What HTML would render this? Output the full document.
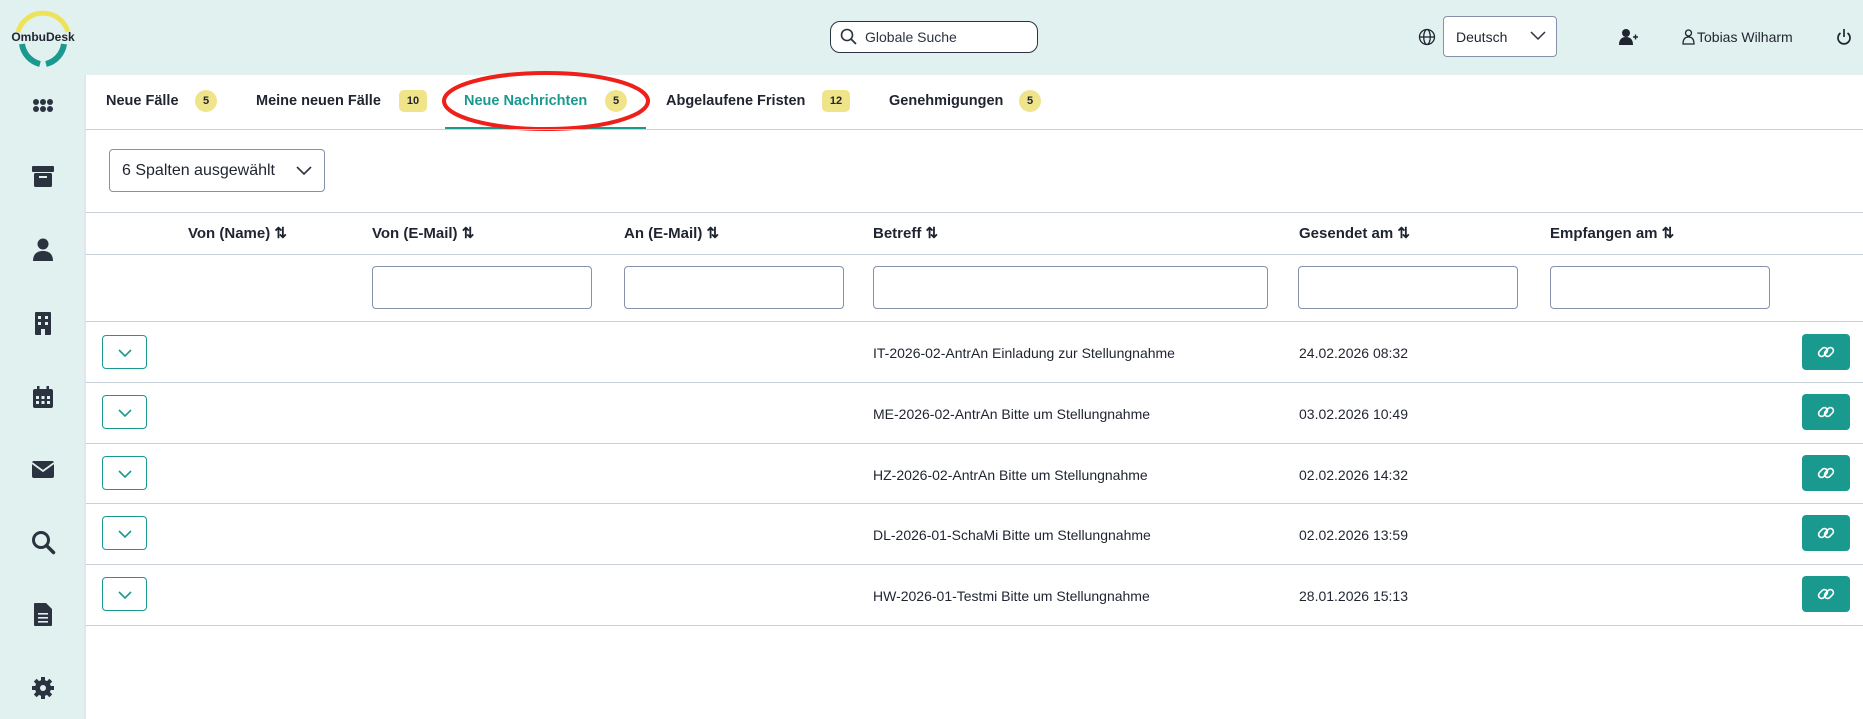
<!DOCTYPE html>
<html><head><meta charset="utf-8"><style>
*{box-sizing:border-box;margin:0;padding:0}
body{width:1863px;height:719px;overflow:hidden;background:#fff;font-family:"Liberation Sans",sans-serif;color:#1f2430;position:relative}
.hdr{position:absolute;left:0;top:0;width:1863px;height:75px;background:#e1f1ef}
.side{position:absolute;left:0;top:75px;width:86px;height:644px;background:#e1f1ef;border-right:2px solid #e3e6ea}
.abs{position:absolute}
.tab{position:absolute;top:93px;font-size:14.5px;font-weight:bold;color:#1f2430}
.badge{position:absolute;top:90px;height:22px;border-radius:11px;background:#efe48a;font-size:11px;font-weight:bold;text-align:center;line-height:22px;color:#1f2430}
.hl{position:absolute;left:86px;width:1777px;height:1px;background:#c8d0da}
.th{position:absolute;top:224px;font-size:15px;font-weight:bold}
.inp{position:absolute;top:266px;height:43px;border:1px solid #8592aa;border-radius:4px}
.td{position:absolute;font-size:14px}
.exp{position:absolute;left:102px;width:45px;height:34px;border:1px solid #1a9a8f;border-radius:4px}
.lnk{position:absolute;left:1802px;width:48px;height:36px;background:#1a9a8f;border-radius:4px}
.ic{position:absolute;left:27px;width:32px;height:32px}
</style></head><body>
<div class="hdr"></div>
<div class="side"></div>
<svg class="abs" style="left:6px;top:4px" width="74" height="64" viewBox="0 0 74 64">
<path d="M12 28 A26 26 0 0 1 62 28" fill="none" stroke="#ece35a" stroke-width="5"/>
<path d="M16 40 A24 24 0 0 0 34 60" fill="none" stroke="#1a9a8f" stroke-width="6"/>
<path d="M40 60 A24 24 0 0 0 58 40" fill="none" stroke="#1a9a8f" stroke-width="6"/>
<text x="37" y="37" font-size="12" font-weight="bold" text-anchor="middle" fill="#1f2430" font-family="Liberation Sans">OmbuDesk</text>
</svg>
<div class="abs" style="left:830px;top:21px;width:208px;height:32px;border:1.5px solid #2b3340;border-radius:10px;background:#fff"></div>
<svg class="abs" style="left:840px;top:28px" width="18" height="18" viewBox="0 0 18 18"><circle cx="7" cy="7" r="5.5" fill="none" stroke="#2b3340" stroke-width="1.6"/><path d="M11 11l5 5" stroke="#2b3340" stroke-width="1.8"/></svg>
<div class="abs" style="left:865px;top:29px;font-size:14px;color:#2b3340">Globale Suche</div>
<svg class="abs" style="left:1418px;top:28px" width="18" height="18" viewBox="0 0 18 18"><g fill="none" stroke="#1f2430" stroke-width="1.3"><circle cx="9" cy="9" r="7.5"/><ellipse cx="9" cy="9" rx="3.3" ry="7.5"/><path d="M1.5 9h15"/></g></svg>
<div class="abs" style="left:1443px;top:16px;width:114px;height:41px;border:1px solid #8592aa;border-radius:4px;background:#fff"></div>
<div class="abs" style="left:1456px;top:29px;font-size:14px">Deutsch</div>
<svg class="abs" style="left:1530px;top:31px" width="16" height="10" viewBox="0 0 16 10"><path d="M1 1l7 7 7-7" fill="none" stroke="#2b3340" stroke-width="1.5"/></svg>
<svg class="abs" style="left:1619px;top:28px" width="20" height="18" viewBox="0 0 20 18"><circle cx="7" cy="5" r="4" fill="#1f2430"/><path d="M0 17c0-6 3-8 7-8s7 2 7 8z" fill="#1f2430"/><path d="M14 9h5M16.5 6.5v5" stroke="#1f2430" stroke-width="1.4"/></svg>
<svg class="abs" style="left:1682px;top:29px" width="13" height="16" viewBox="0 0 13 16"><circle cx="6.5" cy="4" r="3" fill="none" stroke="#1f2430" stroke-width="1.3"/><path d="M1 15c0-5 2-7 5.5-7s5.5 2 5.5 7z" fill="none" stroke="#1f2430" stroke-width="1.3"/></svg>
<div class="abs" style="left:1697px;top:29px;font-size:14px">Tobias Wilharm</div>
<svg class="abs" style="left:1836px;top:28px" width="16" height="18" viewBox="0 0 16 18"><path d="M4.5 5a6 6 0 1 0 7 0" fill="none" stroke="#1f2430" stroke-width="1.7"/><path d="M8 1v8" stroke="#1f2430" stroke-width="1.7"/></svg>
<svg class="ic" style="top:89px" viewBox="0 0 32 32"><g fill="#2b3340"><circle cx="9" cy="13" r="3"/><circle cx="16" cy="13" r="3"/><circle cx="23" cy="13" r="3"/><circle cx="9" cy="20" r="3"/><circle cx="16" cy="20" r="3"/><circle cx="23" cy="20" r="3"/></g></svg>
<svg class="ic" style="top:160px" viewBox="0 0 32 32"><rect x="5" y="6" width="22" height="6" rx="1" fill="#2b3340"/><rect x="7" y="13" width="18" height="14" rx="1.5" fill="#2b3340"/><rect x="12" y="16" width="8" height="2" fill="#e1f1ef"/></svg>
<svg class="ic" style="top:233px" viewBox="0 0 32 32"><circle cx="16" cy="11" r="5.5" fill="#2b3340"/><path d="M6 28c0-7 4-10 10-10s10 3 10 10z" fill="#2b3340"/></svg>
<svg class="ic" style="top:307px" viewBox="0 0 32 32"><rect x="8" y="5" width="16" height="23" rx="1" fill="#2b3340"/><g fill="#e1f1ef"><rect x="11" y="9" width="3" height="3"/><rect x="18" y="9" width="3" height="3"/><rect x="11" y="15" width="3" height="3"/><rect x="18" y="15" width="3" height="3"/><rect x="14" y="22" width="4" height="6"/></g></svg>
<svg class="ic" style="top:381px" viewBox="0 0 32 32"><rect x="6" y="8" width="20" height="19" rx="2" fill="#2b3340"/><rect x="10" y="5" width="2.5" height="5" fill="#2b3340"/><rect x="19.5" y="5" width="2.5" height="5" fill="#2b3340"/><g fill="#e1f1ef"><rect x="9" y="15" width="3" height="3"/><rect x="14.5" y="15" width="3" height="3"/><rect x="20" y="15" width="3" height="3"/><rect x="9" y="20" width="3" height="3"/><rect x="14.5" y="20" width="3" height="3"/><rect x="20" y="20" width="3" height="3"/></g></svg>
<svg class="ic" style="top:453px" viewBox="0 0 32 32"><rect x="5" y="8" width="22" height="17" rx="2" fill="#2b3340"/><path d="M5 10l11 8 11-8" fill="none" stroke="#e1f1ef" stroke-width="1.8"/></svg>
<svg class="ic" style="top:526px" viewBox="0 0 32 32"><circle cx="14" cy="14" r="7.5" fill="none" stroke="#2b3340" stroke-width="3"/><path d="M19.5 19.5l7 7" stroke="#2b3340" stroke-width="3.5" stroke-linecap="round"/></svg>
<svg class="ic" style="top:598px" viewBox="0 0 32 32"><path d="M8 5h11l6 6v16a1 1 0 0 1-1 1H8a1 1 0 0 1-1-1V6a1 1 0 0 1 1-1z" fill="#2b3340"/><g fill="#e1f1ef"><rect x="11" y="15" width="10" height="1.6"/><rect x="11" y="19" width="10" height="1.6"/><rect x="11" y="23" width="10" height="1.6"/></g></svg>
<svg class="ic" style="top:672px" viewBox="0 0 32 32"><g fill="#2b3340"><circle cx="16" cy="16" r="8"/><g stroke="#2b3340" stroke-width="4"><path d="M16 5v22M5 16h22M8.2 8.2l15.6 15.6M23.8 8.2L8.2 23.8"/></g></g><circle cx="16" cy="16" r="3" fill="#e1f1ef"/></svg>
<div class="tab" style="left:106px">Neue Fälle</div><div class="badge" style="left:195px;width:22px">5</div>
<div class="tab" style="left:256px">Meine neuen Fälle</div><div class="badge" style="left:399px;width:28px;border-radius:5px">10</div>
<div class="tab" style="left:464px;color:#1a9a8f">Neue Nachrichten</div><div class="badge" style="left:605px;width:22px">5</div>
<div class="abs" style="left:445px;top:127px;width:201px;height:2px;background:#1a9a8f"></div>
<div class="tab" style="left:666px">Abgelaufene Fristen</div><div class="badge" style="left:822px;width:28px;border-radius:5px">12</div>
<div class="tab" style="left:889px">Genehmigungen</div><div class="badge" style="left:1019px;width:22px">5</div>
<svg class="abs" style="left:440px;top:68px" width="212" height="66"><ellipse cx="106" cy="33" rx="102" ry="28" fill="none" stroke="#ef1f1a" stroke-width="4"/></svg>
<div class="hl" style="top:129px"></div>
<div class="abs" style="left:109px;top:149px;width:216px;height:43px;border:1px solid #8592aa;border-radius:4px"></div>
<div class="abs" style="left:122px;top:162px;font-size:16px">6 Spalten ausgewählt</div>
<svg class="abs" style="left:296px;top:166px" width="16" height="10" viewBox="0 0 16 10"><path d="M1 1l7 7 7-7" fill="none" stroke="#2b3340" stroke-width="1.6"/></svg>
<div class="hl" style="top:212px"></div>
<div class="th" style="left:188px">Von (Name) ⇅</div>
<div class="th" style="left:372px">Von (E-Mail) ⇅</div>
<div class="th" style="left:624px">An (E-Mail) ⇅</div>
<div class="th" style="left:873px">Betreff ⇅</div>
<div class="th" style="left:1299px">Gesendet am ⇅</div>
<div class="th" style="left:1550px">Empfangen am ⇅</div>
<div class="hl" style="top:254px"></div>
<div class="inp" style="left:372px;width:220px"></div>
<div class="inp" style="left:624px;width:220px"></div>
<div class="inp" style="left:873px;width:395px"></div>
<div class="inp" style="left:1298px;width:220px"></div>
<div class="inp" style="left:1550px;width:220px"></div>
<div class="hl" style="top:321px"></div>
<div class="exp" style="top:335px"></div><div class="td" style="left:873px;top:345px">IT-2026-02-AntrAn Einladung zur Stellungnahme</div><div class="td" style="left:1299px;top:345px">24.02.2026 08:32</div><div class="lnk" style="top:334px"></div>
<div class="hl" style="top:382px"></div>
<div class="exp" style="top:395px"></div><div class="td" style="left:873px;top:406px">ME-2026-02-AntrAn Bitte um Stellungnahme</div><div class="td" style="left:1299px;top:406px">03.02.2026 10:49</div><div class="lnk" style="top:394px"></div>
<div class="hl" style="top:443px"></div>
<div class="exp" style="top:456px"></div><div class="td" style="left:873px;top:467px">HZ-2026-02-AntrAn Bitte um Stellungnahme</div><div class="td" style="left:1299px;top:467px">02.02.2026 14:32</div><div class="lnk" style="top:455px"></div>
<div class="hl" style="top:503px"></div>
<div class="exp" style="top:516px"></div><div class="td" style="left:873px;top:527px">DL-2026-01-SchaMi Bitte um Stellungnahme</div><div class="td" style="left:1299px;top:527px">02.02.2026 13:59</div><div class="lnk" style="top:515px"></div>
<div class="hl" style="top:564px"></div>
<div class="exp" style="top:577px"></div><div class="td" style="left:873px;top:588px">HW-2026-01-Testmi Bitte um Stellungnahme</div><div class="td" style="left:1299px;top:588px">28.01.2026 15:13</div><div class="lnk" style="top:576px"></div>
<div class="hl" style="top:625px"></div>
<svg width="0" height="0" style="position:absolute"><defs>
<symbol id="ch" viewBox="0 0 16 10"><path d="M2 2l6 6 6-6" fill="none" stroke="#1a9a8f" stroke-width="1.6"/></symbol>
<symbol id="lk" viewBox="0 0 20 20"><g fill="none" stroke="#fff" stroke-width="1.6"><rect x="2" y="7" width="10" height="6" rx="3" transform="rotate(-45 7 10)"/><rect x="8" y="7" width="10" height="6" rx="3" transform="rotate(-45 13 10)"/></g></symbol>
</defs></svg>
<svg class="abs" style="left:117px;top:348px" width="16" height="10"><use href="#ch"/></svg>
<svg class="abs" style="left:117px;top:408px" width="16" height="10"><use href="#ch"/></svg>
<svg class="abs" style="left:117px;top:469px" width="16" height="10"><use href="#ch"/></svg>
<svg class="abs" style="left:117px;top:529px" width="16" height="10"><use href="#ch"/></svg>
<svg class="abs" style="left:117px;top:590px" width="16" height="10"><use href="#ch"/></svg>
<svg class="abs" style="left:1816px;top:342px" width="20" height="20"><use href="#lk"/></svg>
<svg class="abs" style="left:1816px;top:402px" width="20" height="20"><use href="#lk"/></svg>
<svg class="abs" style="left:1816px;top:463px" width="20" height="20"><use href="#lk"/></svg>
<svg class="abs" style="left:1816px;top:523px" width="20" height="20"><use href="#lk"/></svg>
<svg class="abs" style="left:1816px;top:584px" width="20" height="20"><use href="#lk"/></svg>
</body></html>
